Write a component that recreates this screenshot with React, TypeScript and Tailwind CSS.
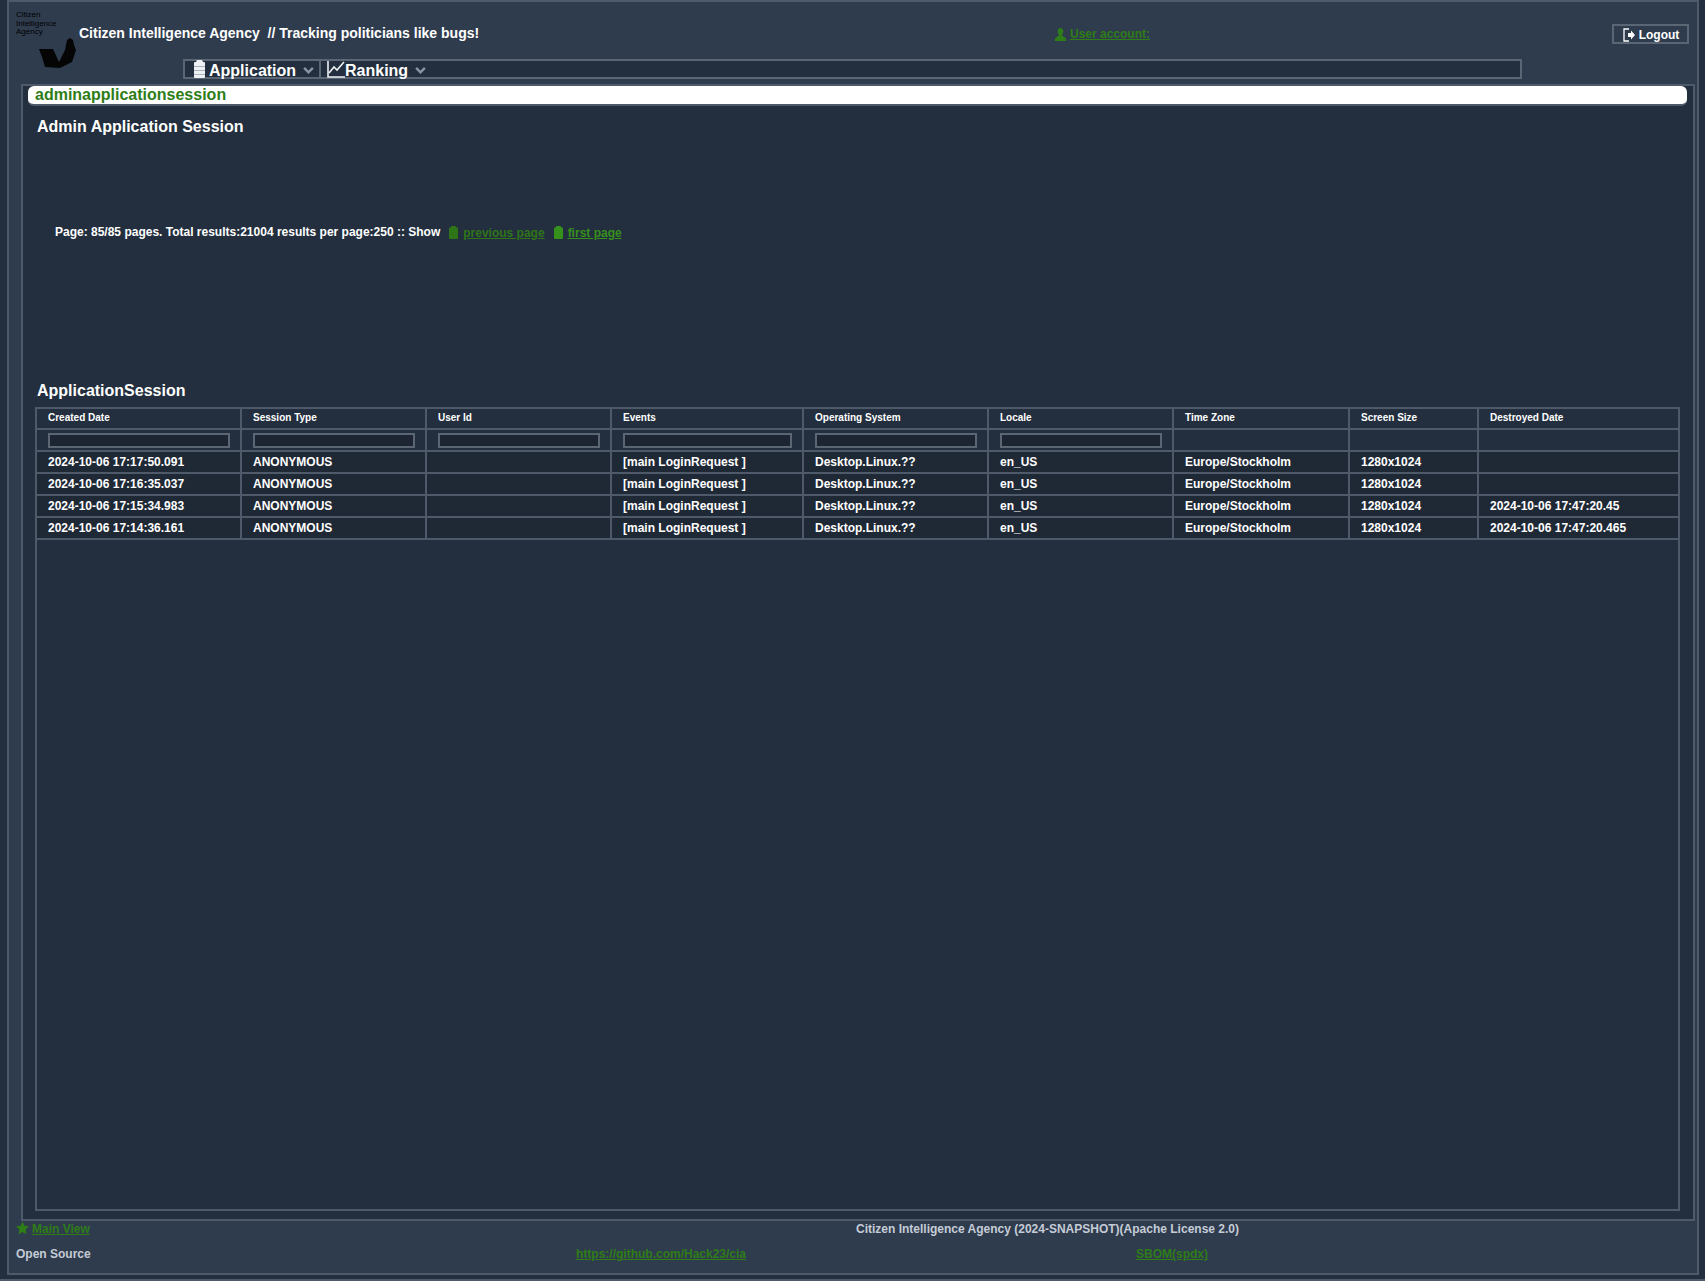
const COLUMNS = [
  { label: "Created Date", width: "w-[204px]", input: "w-[182px]" },
  { label: "Session Type", width: "w-[185px]", input: "w-[162px]" },
  { label: "User Id", width: "w-[185px]", input: "w-[162px]" },
  { label: "Events", width: "w-[192px]", input: "w-[169px]" },
  { label: "Operating System", width: "w-[185px]", input: "w-[162px]" },
  { label: "Locale", width: "w-[185px]", input: "w-[162px]" },
  { label: "Time Zone", width: "w-[176px]", input: "" },
  { label: "Screen Size", width: "w-[129px]", input: "" },
  { label: "Destroyed Date", width: "w-auto", input: "" },
];

const ROWS = [
  ["2024-10-06 17:17:50.091", ""],
  ["2024-10-06 17:16:35.037", ""],
  ["2024-10-06 17:15:34.983", "2024-10-06 17:47:20.45"],
  ["2024-10-06 17:14:36.161", "2024-10-06 17:47:20.465"],
];

function DocIcon({ className }: { className: string }) {
  return (
    <svg viewBox="0 0 9 13" className={className} fill="currentColor">
      <path d="M2.500 0h4L7.500 1.500H8a1 1 0 0 1 1 1V12a1 1 0 0 1-1 1H1a1 1 0 0 1-1-1V2.500a1 1 0 0 1 1-1h.5z" />
    </svg>
  );
}

function AppIcon() {
  return (
    <svg viewBox="0 0 11 18" className="h-[18px] w-[11px]">
      <path fill="#eef1f4" d="M3 0h5l1 2h1a1 1 0 0 1 1 1v14a1 1 0 0 1-1 1H1a1 1 0 0 1-1-1V3a1 1 0 0 1 1-1h1z" />
      <path stroke="#aab2bc" strokeWidth="1" d="M0 6.500h11M0 10.500h11M0 14.500h11" />
    </svg>
  );
}

function ChartIcon() {
  return (
    <svg viewBox="0 0 18 17" className="h-[17px] w-[18px]" fill="none" stroke="#eef1f4" strokeWidth="1.600">
      <path d="M1 0v16h17" />
      <path d="M2 12l5-6 3 3 7-8" />
    </svg>
  );
}

function Chevron() {
  return (
    <svg viewBox="0 0 12 8" className="h-[7px] w-[11px]" fill="none" stroke="#8b95a3" strokeWidth="2.800">
      <path d="M1 1l5 5 5-5" />
    </svg>
  );
}

function Logo() {
  return (
    <div className="relative h-[72px] w-[63px] shrink-0">
      <div className="pt-[9px] pl-[1px] text-[8px] leading-[8.500px] font-normal text-black">
        <div>Citizen</div>
        <div>Intelligence</div>
        <div>Agency</div>
      </div>
      <svg viewBox="0 0 40 32" className="absolute top-[35px] left-[23px] h-[32px] w-[40px]" fill="#050505">
        <path d="M1 12h14l6 13 6-12 1-5 1-5 3-2 3 2 1 5 2 5-4 12-12 6-15-1-3-10z" />
      </svg>
    </div>
  );
}

export default function App() {
  return (
    <div className="h-[1281px] border-b-2 border-[#4e5a6a] bg-[#232f3e] pl-[7px] font-['Liberation_Sans',Arial,sans-serif] font-bold text-white">
      <div className="flex h-[1275px] w-[1692px] flex-col border-2 border-[#4e5a6a] bg-[#2f3c4e]">
        <div className="relative flex h-[82px] shrink-0 pl-[6px]">
          <Logo />
          <div className="pt-[21px] pl-[1px] text-[14px] whitespace-pre">Citizen Intelligence Agency  // Tracking politicians like bugs!</div>
          <div className="absolute top-[23px] left-[1046px] flex items-center gap-[4px] text-[12px]">
            <svg viewBox="0 0 12 14" className="h-[13px] w-[11px]" fill="#2e7d17">
              <path d="M6 0c2 0 3 1.500 3 3.500S8 7 7.500 8l4.500 3v3H0v-3l4.500-3C4 7 3 5.500 3 3.500S4 0 6 0z" />
            </svg>
            <a className="text-[#2e7d17] underline">User account:</a>
          </div>
          <button className="absolute top-[22px] right-[8px] flex h-[20px] w-[77px] items-center justify-center gap-[3px] border-2 border-[#5b6675] pt-[1px] text-[12px]">
            <svg viewBox="0 0 14 14" className="h-[14px] w-[14px]" fill="none" stroke="#fff" strokeWidth="1.300">
              <path d="M7 1H2v12h5" />
              <path d="M6 5h3V2.500L13 7l-4 4.500V9H6z" fill="#fff" stroke="none" />
            </svg>
            Logout
          </button>
          <div className="absolute top-[57px] left-[174px] flex h-[20px] w-[1339px] items-center border-2 border-[#5b6675] bg-[#232f3e] text-[16px]">
            <div className="flex h-full w-[136px] items-center border-r-2 border-[#5b6675] pl-[9px]">
              <AppIcon />
              <span className="ml-[4px] pt-[4px]">Application</span>
              <span className="ml-[7px] pt-[2px]"><Chevron /></span>
            </div>
            <div className="flex h-full items-center pl-[6px]">
              <ChartIcon />
              <span className="pt-[4px]">Ranking</span>
              <span className="ml-[7px] pt-[2px]"><Chevron /></span>
            </div>
          </div>
        </div>

        <div className="mr-[2px] ml-[12px] flex h-[1137px] shrink-0 flex-col border-2 border-[#4e5a6a] bg-[#232f3e] pr-[6px] pl-[5px]">
          <div className="h-[20px] shrink-0 rounded-[6px] border-b-2 border-[#4e5a6a] bg-white pl-[7px] text-[16px] leading-[18px] text-[#2e7d17]">
            adminapplicationsession
          </div>
          <div className="pt-[11px] pl-[9px] text-[16px] leading-[20px]">Admin Application Session</div>
          <div className="flex items-center pt-[87px] pl-[27px] text-[12px] leading-[14px]">
            <span>Page: 85/85 pages. Total results:21004 results per page:250 :: Show</span>
            <DocIcon className="ml-[9px] h-[13px] w-[9px] text-[#2e7518]" />
            <a className="ml-[5px] pt-[2px] text-[#2e7518] underline">previous page</a>
            <DocIcon className="ml-[9px] h-[13px] w-[9px] text-[#36901c]" />
            <a className="ml-[5px] pt-[2px] text-[#36901c] underline">first page</a>
          </div>
          <div className="pt-[141px] pl-[9px] text-[16px] leading-[20px]">ApplicationSession</div>
          <div className="mt-[6px] mr-[7px] ml-[7px] h-[804px] border-2 border-[#4e5a6a]">
            <table className="w-full table-fixed border-collapse text-left">
              <thead>
                <tr className="h-[20px] text-[10px]">
                  {COLUMNS.map((c) => (
                    <th key={c.label} className={`${c.width} border-r-2 border-b-2 border-[#4e5a6a] pb-[2px] pl-[11px] font-bold last:border-r-0`}>
                      {c.label}
                    </th>
                  ))}
                </tr>
                <tr className="h-[22px]">
                  {COLUMNS.map((c) => (
                    <th key={c.label} className="border-r-2 border-b-2 border-[#4e5a6a] pl-[11px] last:border-r-0">
                      {c.input && <input className={`${c.input} block h-[15px] border-2 border-[#5b6675] bg-[#1d2533]`} />}
                    </th>
                  ))}
                </tr>
              </thead>
              <tbody className="bg-[#1f2936] text-[12px]">
                {ROWS.map((r) => (
                  <tr key={r[0]} className="h-[22px]">
                    <td className="border-r-2 border-b-2 border-[#4e5a6a] pl-[11px]">{r[0]}</td>
                    <td className="border-r-2 border-b-2 border-[#4e5a6a] pl-[11px]">ANONYMOUS</td>
                    <td className="border-r-2 border-b-2 border-[#4e5a6a] pl-[11px]"></td>
                    <td className="border-r-2 border-b-2 border-[#4e5a6a] pl-[11px]">[main LoginRequest ]</td>
                    <td className="border-r-2 border-b-2 border-[#4e5a6a] pl-[11px]">Desktop.Linux.??</td>
                    <td className="border-r-2 border-b-2 border-[#4e5a6a] pl-[11px]">en_US</td>
                    <td className="border-r-2 border-b-2 border-[#4e5a6a] pl-[11px]">Europe/Stockholm</td>
                    <td className="border-r-2 border-b-2 border-[#4e5a6a] pl-[11px]">1280x1024</td>
                    <td className="border-b-2 border-[#4e5a6a] pl-[11px]">{r[1]}</td>
                  </tr>
                ))}
              </tbody>
            </table>
          </div>
        </div>

        <div className="relative flex-1 text-[12px] text-[#c5ccd6]">
          <div className="absolute top-[-1px] left-[7px] flex items-center gap-[3px]">
            <svg viewBox="0 0 14 14" className="h-[14px] w-[13px] -translate-y-[1px]" fill="#2e7d17">
              <path d="M7 0l2.100 4.600 4.900.6-3.600 3.400.9 5L7 11.200 2.700 13.600l.9-5L0 5.200l4.900-.6z" />
            </svg>
            <a className="text-[#2e7d17] underline">Main View</a>
          </div>
          <div className="absolute top-[-1px] left-[847px]">Citizen Intelligence Agency (2024-SNAPSHOT)(Apache License 2.0)</div>
          <div className="absolute top-[24px] left-[7px]">Open Source</div>
          <a className="absolute top-[24px] left-[567px] text-[#2e7d17] underline">https://github.com/Hack23/cia</a>
          <a className="absolute top-[24px] left-[1127px] text-[#2e7d17] underline">SBOM(spdx)</a>
        </div>
      </div>
    </div>
  );
}
